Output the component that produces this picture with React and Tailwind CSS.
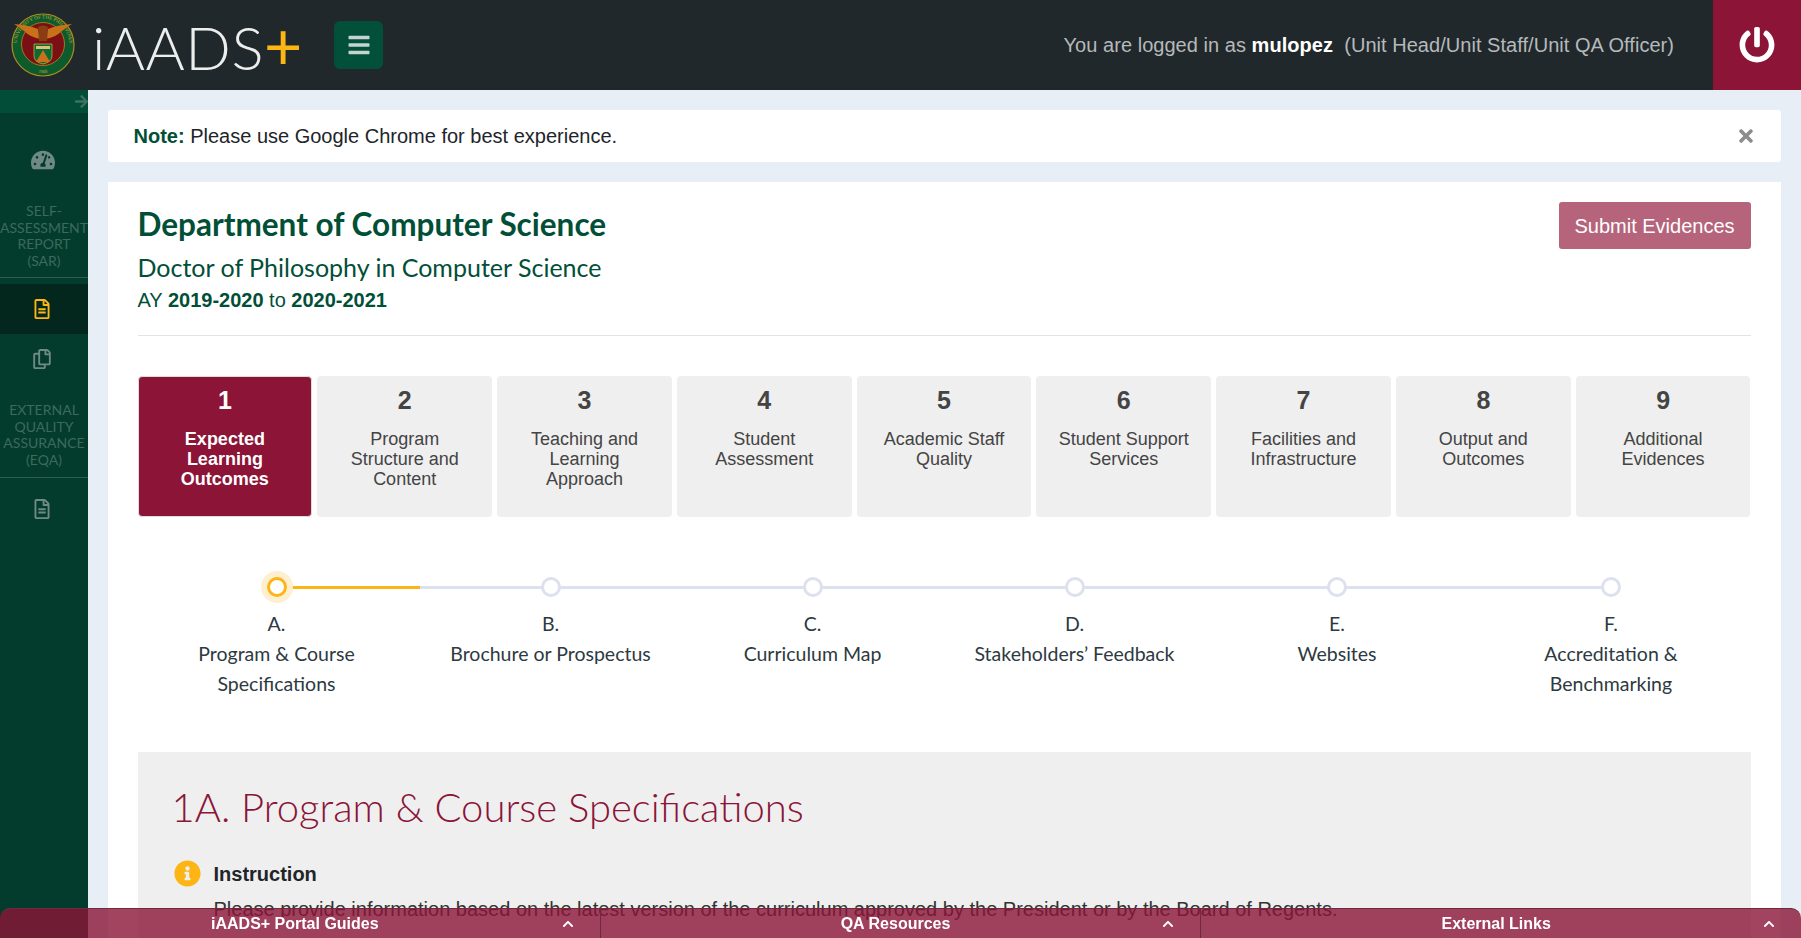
import { FaBars, FaChevronUp, FaInfoCircle, FaPowerOff, FaTachometerAlt, FaTimes, FaArrowRight, FaRegFileAlt, FaRegCopy } from 'react-icons/fa';

const areas = [
  ['1', ['Expected', 'Learning', 'Outcomes']],
  ['2', ['Program', 'Structure and', 'Content']],
  ['3', ['Teaching and', 'Learning', 'Approach']],
  ['4', ['Student', 'Assessment']],
  ['5', ['Academic Staff', 'Quality']],
  ['6', ['Student Support', 'Services']],
  ['7', ['Facilities and', 'Infrastructure']],
  ['8', ['Output and', 'Outcomes']],
  ['9', ['Additional', 'Evidences']],
];

const steps = [
  { letter: 'A.', lines: ['Program & Course', 'Specifications'], width: 'w-[278px]' },
  { letter: 'B.', lines: ['Brochure or Prospectus'], width: 'w-[270px]' },
  { letter: 'C.', lines: ['Curriculum Map'], width: 'w-[254px]' },
  { letter: 'D.', lines: ['Stakeholders’ Feedback'], width: 'w-[270px]' },
  { letter: 'E.', lines: ['Websites'], width: 'w-[255px]' },
  { letter: 'F.', lines: ['Accreditation &', 'Benchmarking'], width: 'w-[279px] ml-[7px]' },
];

const humanist = "font-['Lato',sans-serif]";

function Seal() {
  return (
    <svg viewBox="0 0 64 64" className="w-[64px] h-[64px]">
      <defs>
        <path id="sealRing" d="M12.5 50 A26.5 26.5 0 1 1 51.5 50" />
        <path id="sealBottom" d="M6 34 A26 26 0 0 0 58 34" />
      </defs>
      <circle cx="32" cy="32" r="31" fill="#0d5a2c" stroke="#b08d1f" strokeWidth="1.2" />
      <circle cx="32" cy="31" r="21.5" fill="#7a0f14" stroke="#b08d1f" strokeWidth="0.8" />
      <text fontSize="5" fill="#c9a93a" fontFamily="Liberation Serif, serif">
        <textPath href="#sealRing" startOffset="50%" textAnchor="middle">UNIVERSITY OF THE PHILIPPINES</textPath>
      </text>
      <text fontSize="4.6" fill="#c9a93a" fontFamily="Liberation Serif, serif">
        <textPath href="#sealBottom" startOffset="50%" textAnchor="middle">1908</textPath>
      </text>
      <path d="M3 11 Q18 12 27 16 L29 26 Q19 24 13 18 Q8 14 3 11 Z" fill="#c9701a" />
      <path d="M61 11 Q46 12 37 16 L35 26 Q45 24 51 18 Q56 14 61 11 Z" fill="#c9701a" />
      <path d="M27 14 Q32 11 37 14 L36 28 H28 Z" fill="#8a3c12" />
      <path d="M23 31 H41 V43 Q41 49 32 51 Q23 49 23 43 Z" fill="#0d6a35" stroke="#c9a93a" strokeWidth="0.8" />
      <path d="M32 37 L39 49 H25 Z" fill="#c9701a" />
      <path d="M25 33 H39 V36 H25 Z" fill="#d9c27a" />
    </svg>
  );
}

function NavLabel({ lines }) {
  return (
    <div className={`${humanist} text-[14px] leading-[16.5px] text-[#3c6a5c] text-center whitespace-nowrap`}>
      {lines.map((l) => (
        <div key={l}>{l}</div>
      ))}
    </div>
  );
}

function Sidebar() {
  return (
    <aside className="w-[88px] shrink-0 bg-[#033c2c] flex flex-col">
      <div className="h-[23px] bg-[#024d37] flex items-center justify-end text-[#3f7062] text-[15px] -mr-[1px]">
        <FaArrowRight />
      </div>
      <div className="h-[47px] mt-[23px] mb-[2px] flex items-center justify-center text-[#6f8a83] text-[24px] pr-[2px]">
        <FaTachometerAlt />
      </div>
      <div className="pt-[18px] pb-[8px] border-b border-[#2a5f50]">
        <NavLabel lines={['SELF-', 'ASSESSMENT', 'REPORT', '(SAR)']} />
      </div>
      <div className="mt-[6px] h-[50px] bg-[#03271c] flex items-center justify-center text-[#fdb515] text-[20px] pr-[4px]">
        <FaRegFileAlt />
      </div>
      <div className="h-[50px] flex items-center justify-center text-[#6f8a83] text-[20px] pr-[4px]">
        <FaRegCopy />
      </div>
      <div className="pt-[18px] pb-[9px] border-b border-[#2a5f50]">
        <NavLabel lines={['EXTERNAL', 'QUALITY', 'ASSURANCE', '(EQA)']} />
      </div>
      <div className="h-[62px] flex items-center justify-center text-[#6f8a83] text-[20px] pr-[4px]">
        <FaRegFileAlt />
      </div>
    </aside>
  );
}

function BottomBar() {
  const tabs = ['iAADS+ Portal Guides', 'QA Resources', 'External Links'];
  return (
    <div className="fixed bottom-0 left-0 right-0 h-[30px] flex bg-[#8b1437]/80 rounded-t-[10px] border-t border-[#6e2a40] text-white text-[16px] font-bold">
      {tabs.map((t, i) => (
        <div key={t} className={`flex-1 relative flex items-center justify-center pr-[10px] ${i < 2 ? 'border-r border-[#6e2a40]' : ''}`}>
          <span>{t}</span>
          <FaChevronUp className="absolute right-[26px] top-[9px] text-[12px]" />
        </div>
      ))}
    </div>
  );
}

export default function App() {
  return (
    <div className="h-screen overflow-hidden flex flex-col font-['Liberation_Sans',Arial,sans-serif]">
      {/* top bar */}
      <header className="h-[90px] shrink-0 bg-[#20282c] flex items-center">
        <div className="ml-[11px] mr-[17px]">
          <Seal />
        </div>
        <div className={`${humanist} font-light text-[60px] leading-none text-[#eceeee] w-[242px] whitespace-nowrap tracking-[0.5px]`}>
          iAADS<span className="text-[#fdb515] font-normal text-[66px]">+</span>
        </div>
        <button className="w-[49px] h-[48px] rounded-[6px] bg-[#02503a] flex items-center justify-center text-[#c5d4cf] text-[24px]">
          <FaBars />
        </button>
        <div className="ml-auto text-[20px] text-[#b6b9ba] mr-[39px] whitespace-pre tracking-[0.04px]">
          You are logged in as <b className="text-white">mulopez</b>  (Unit Head/Unit Staff/Unit QA Officer)
        </div>
        <div className="w-[88px] h-full bg-[#8b1437] flex items-center justify-center text-white text-[36px]">
          <FaPowerOff />
        </div>
      </header>

      <div className="flex-1 flex min-h-0">
        <Sidebar />
        <main className="flex-1 min-w-0 bg-[#e7eef6] pt-5 pl-[19.5px] pr-[20.5px]">
          {/* note */}
          <div className="h-[52px] bg-white rounded-[3px] flex items-center justify-between pl-[26px] pr-[25px] text-[20px] text-[#212529]">
            <div>
              <b className="text-[#024f38]">Note:</b> Please use Google Chrome for best experience.
            </div>
            <FaTimes className="text-[#8c8c8c] text-[20px]" />
          </div>

          <section className="mt-5 bg-white px-[30px] pt-5 h-[800px]">
            <div className="flex justify-between h-[134px] border-b border-[#e3e3e3]">
              <div className="text-[#024f38]">
                <h1 className={`${humanist} font-bold text-[31.5px] leading-[44px]`}>Department of Computer Science</h1>
                <h2 className={`${humanist} text-[25px] leading-[40px] mt-[1px]`}>Doctor of Philosophy in Computer Science</h2>
                <p className="text-[20px] leading-[26px]">
                  AY <b>2019-2020</b> to <b>2020-2021</b>
                </p>
              </div>
              <button className="w-[192px] h-[47px] rounded-[3px] bg-[#b5647b] text-white text-[20px]">Submit Evidences</button>
            </div>

            {/* areas */}
            <div className="grid grid-cols-9 gap-[5px] mt-[40px]">
              {areas.map(([num, lines], i) => (
                <div
                  key={num}
                  className={`h-[141px] rounded-[4px] text-center ${i === 0 ? 'pt-[8px] bg-[#8b1437] text-white font-bold border border-[#dcdcdc]' : 'pt-[9px] bg-[#efefef] text-[#444]'}`}
                >
                  <div className="text-[25px] leading-[30px] font-bold">{num}</div>
                  <div className="text-[18px] leading-[20px] mt-[14px]">
                    {lines.map((l) => (
                      <div key={l}>{l}</div>
                    ))}
                  </div>
                </div>
              ))}
            </div>

            {/* stepper */}
            <div className="relative flex mt-[58px]">
              <div className="absolute left-[139px] w-[1334px] top-[11px] h-[3px] bg-[#dde1ee]" />
              <div className="absolute left-[139px] w-[143px] top-[11px] h-[3px] bg-[#fdb515]" />
              {steps.map((s, i) => (
                <div key={s.letter} className={`relative ${s.width} flex flex-col items-center shrink-0`}>
                  {i === 0 ? (
                    <div className="w-[32px] h-[32px] -my-[4px] rounded-full bg-[#feefd0] flex items-center justify-center">
                      <div className="w-[20px] h-[20px] rounded-full border-[3px] border-[#fdb515] bg-white" />
                    </div>
                  ) : (
                    <div className="w-[20px] h-[20px] my-[2px] rounded-full border-[3px] border-[#dde1ee] bg-white" />
                  )}
                  <div className={`${humanist} text-[19.5px] leading-[30px] text-[#2d3a3f] text-center mt-[10px]`}>
                    <div>{s.letter}</div>
                    {s.lines.map((l) => (
                      <div key={l}>{l}</div>
                    ))}
                  </div>
                </div>
              ))}
            </div>

            {/* 1A */}
            <div className="mt-[53px] bg-[#efefef] h-[400px] px-[34px] pt-[30px]">
              <h3 className={`${humanist} font-light text-[40px] leading-[50px] text-[#8b1437]`}>1A. Program &amp; Course Specifications</h3>
              <div className="flex mt-[27px]">
                <FaInfoCircle className="text-[#fdb515] text-[27px] mt-[1px] ml-[2px] shrink-0" />
                <div className="ml-[13px] text-[20px]">
                  <div className="font-bold text-[#212529] leading-[30px]">Instruction</div>
                  <div className="text-[#333] leading-[30px] mt-[5px]">
                    Please provide information based on the latest version of the curriculum approved by the President or by the Board of Regents.
                  </div>
                </div>
              </div>
            </div>
          </section>
        </main>
      </div>

      <BottomBar />
    </div>
  );
}
